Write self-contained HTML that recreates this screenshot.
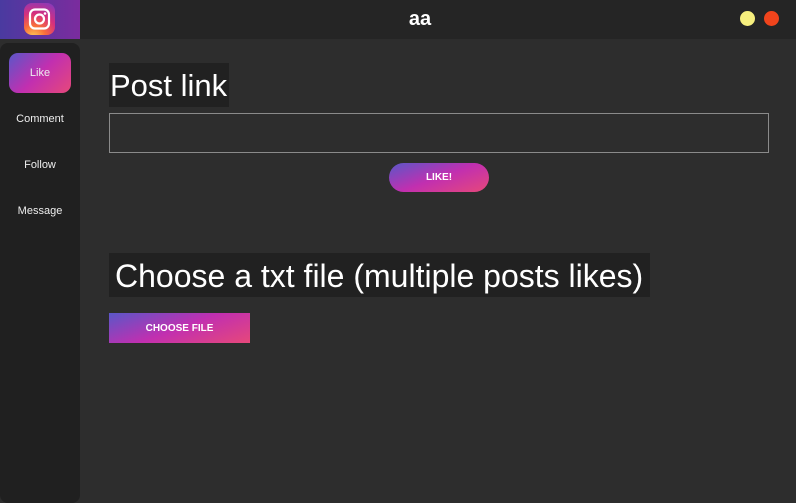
<!DOCTYPE html><html><head><style>
body{margin:0;width:796px;height:497px;background:#2d2d2d;font-family:"Liberation Sans","DejaVu Sans",sans-serif;overflow:hidden;position:relative;color:#fff}
.top{position:absolute;left:0;top:0;width:796px;height:39px;background:#252525}
.logo{position:absolute;left:0;top:0;width:80px;height:39px;background:linear-gradient(90deg,#4a3aa0,#7b2c9e)}
.ig{position:absolute;left:24px;top:3px;width:31px;height:32px;border-radius:8px;background:radial-gradient(circle at 30% 110%,#fdd35a 0,#f9703a 30%,#d62f7d 60%,#7c3bc4 100%)}
.title{position:absolute;left:0;width:840px;top:8px;text-align:center;font-weight:bold;font-size:20px}
.dot{position:absolute;top:11px;width:15px;height:15px;border-radius:50%}
.side{position:absolute;left:0;top:43px;width:80px;height:460px;background:#202020;border-radius:8px}
.nav{position:absolute;left:0;width:80px;text-align:center;font-size:11px;color:#eee}
.likeb{position:absolute;left:9px;top:53px;width:62px;height:40px;border-radius:9px;background:linear-gradient(135deg,#5a57c8,#c12fb0 50%,#e6487a)}
.h{position:absolute;background:#212121;font-family:"Liberation Sans",sans-serif;line-height:46px;color:#fff;white-space:nowrap;overflow:hidden;box-sizing:border-box}
.grad{background:linear-gradient(160deg,#5a57c8,#c12fb0 50%,#e6487a);position:absolute;font-size:10px;font-weight:bold;text-align:center;color:#fff}
</style></head><body>
<div class="top"></div>
<div class="logo"><div class="ig"><svg width="31" height="32" viewBox="0 0 31 32"><rect x="6" y="6.5" width="19" height="19" rx="5" fill="none" stroke="#fff" stroke-width="2.2"/><circle cx="15.5" cy="16" r="4.5" fill="none" stroke="#fff" stroke-width="2.2"/><circle cx="21" cy="10.5" r="1.3" fill="#fff"/></svg></div></div>
<div class="title">aa</div>
<div class="dot" style="left:740px;background:#f6ef7e"></div>
<div class="dot" style="left:764px;background:#f0441c"></div>
<div class="side"></div>
<div class="likeb"></div>
<div class="nav" style="top:67px">Like</div>
<div class="nav" style="top:113px">Comment</div>
<div class="nav" style="top:159px">Follow</div>
<div class="nav" style="top:205px">Message</div>
<div class="h" style="left:109px;top:63px;width:120px;height:44px;padding-left:1px;font-size:31px">Post link</div>
<div style="position:absolute;left:109px;top:113px;width:658px;height:38px;border:1px solid #8a8a8a"></div>
<div class="grad" style="left:389px;top:163px;width:100px;height:29px;line-height:29px;border-radius:15px">LIKE!</div>
<div class="h" style="left:109px;top:253px;width:541px;height:44px;padding-left:6px;font-size:32px">Choose a txt file (multiple posts likes)</div>
<div class="grad" style="left:109px;top:313px;width:141px;height:30px;line-height:31px">CHOOSE FILE</div>
</body></html>
